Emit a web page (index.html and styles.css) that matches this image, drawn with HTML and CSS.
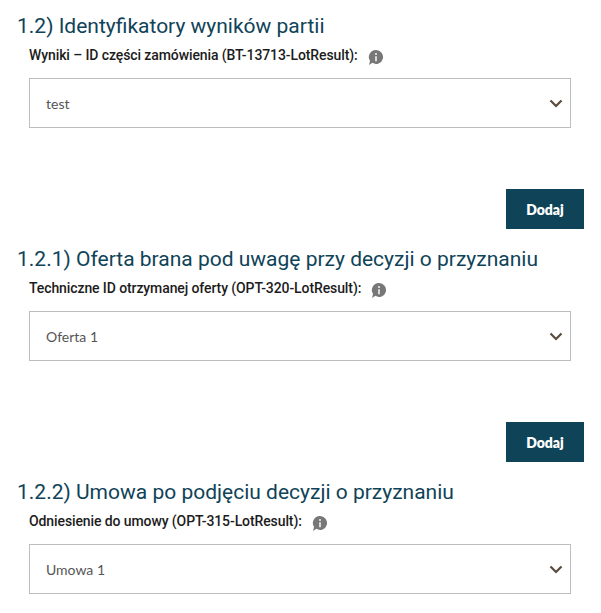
FILE: index.html
```html
<!DOCTYPE html>
<html lang="pl">

<head>
    <meta charset="UTF-8">
    <meta name="viewport" content="width=device-width, initial-scale=1.0">
    <title>Wyniki partii</title>
    <link rel="stylesheet" href="styles.css">
</head>

<body>

    <!-- 1.2 -->
    <section class="block">
        <h2>1.2) Identyfikatory wyników partii</h2>
        <div class="field-label">
            <label>Wyniki – ID części zamówienia (BT-13713-LotResult):</label>
            <svg class="info" viewBox="1 0 15 15"><path d="M8.500 1a6.500 6.500 0 1 1-3.400 12L2 15l.9-3.900A6.500 6.500 0 0 1 8.500 1z"/><rect x="7.600" y="6.800" width="1.800" height="4.700" fill="#ddd"/><rect x="7.600" y="3.800" width="1.800" height="1.800" fill="#ddd"/></svg>
        </div>
        <div class="select-box">
            <span>test</span>
            <svg class="chevron" viewBox="0 0 14 9"><path d="M1.500 1.500L7 7l5.500-5.500"/></svg>
        </div>
        <div class="actions"><button>Dodaj</button></div>
    </section>

    <!-- 1.2.1 -->
    <section class="block">
        <h2>1.2.1) Oferta brana pod uwagę przy decyzji o przyznaniu</h2>
        <div class="field-label">
            <label>Techniczne ID otrzymanej oferty (OPT-320-LotResult):</label>
            <svg class="info" viewBox="1 0 15 15"><path d="M8.500 1a6.500 6.500 0 1 1-3.400 12L2 15l.9-3.900A6.500 6.500 0 0 1 8.500 1z"/><rect x="7.600" y="6.800" width="1.800" height="4.700" fill="#ddd"/><rect x="7.600" y="3.800" width="1.800" height="1.800" fill="#ddd"/></svg>
        </div>
        <div class="select-box">
            <span>Oferta 1</span>
            <svg class="chevron" viewBox="0 0 14 9"><path d="M1.500 1.500L7 7l5.500-5.500"/></svg>
        </div>
        <div class="actions"><button>Dodaj</button></div>
    </section>

    <!-- 1.2.2 -->
    <section class="block">
        <h2>1.2.2) Umowa po podjęciu decyzji o przyznaniu</h2>
        <div class="field-label">
            <label>Odniesienie do umowy (OPT-315-LotResult):</label>
            <svg class="info" viewBox="1 0 15 15"><path d="M8.500 1a6.500 6.500 0 1 1-3.400 12L2 15l.9-3.900A6.500 6.500 0 0 1 8.500 1z"/><rect x="7.600" y="6.800" width="1.800" height="4.700" fill="#ddd"/><rect x="7.600" y="3.800" width="1.800" height="1.800" fill="#ddd"/></svg>
        </div>
        <div class="select-box">
            <span>Umowa 1</span>
            <svg class="chevron" viewBox="0 0 14 9"><path d="M1.500 1.500L7 7l5.500-5.500"/></svg>
        </div>
    </section>

</body>

</html>
```
FILE: styles.css
```css
html,
body {
    margin: 0;
    padding: 0;
    background-color: #fff;
    overflow: hidden;
}

body {
    height: 613px;
    padding: 13px 17px 0;
    box-sizing: border-box;
    font-family: Roboto, sans-serif;
}

.block {
    margin-bottom: 17px;
}

h2 {
    margin: 0;
    font-size: 21px;
    font-weight: 400;
    line-height: 26px;
    color: #0f4358;
}

.field-label {
    display: flex;
    align-items: center;
    height: 20px;
    margin: 6px 0 13px 12px;
}

label {
    font-size: 14px;
    font-weight: 500;
    letter-spacing: -0.1px;
    color: #1c1c1c;
}

.info {
    width: 16px;
    height: 16px;
    margin: 3px 0 0 10px;
    fill: #777;
}

.select-box {
    display: flex;
    align-items: center;
    justify-content: space-between;
    box-sizing: border-box;
    width: 542px;
    height: 50px;
    margin-left: 12px;
    padding: 0 7px 0 16px;
    border: 1px solid #bdbdbd;
    font-family: Lato, sans-serif;
    font-size: 14px;
    color: #555;
}

.chevron {
    width: 14px;
    height: 9px;
    fill: none;
    stroke: #5a4a3c;
    stroke-width: 2.2;
}

.actions {
    display: flex;
    justify-content: flex-end;
    margin-top: 61px;
}

button {
    width: 78px;
    height: 40px;
    padding: 0;
    border: 0;
    background-color: #0f4358;
    color: #fff;
    font-family: Lato, sans-serif;
    font-size: 14px;
    font-weight: 800;
}
```
